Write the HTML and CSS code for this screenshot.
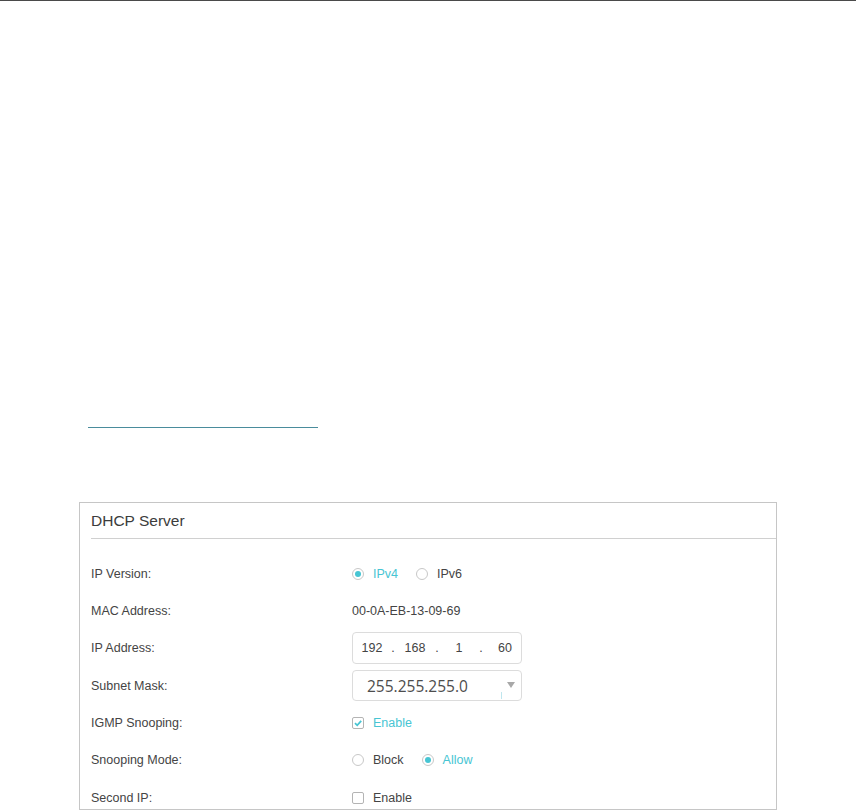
FILE: index.html
```html
<!DOCTYPE html>
<html>
<head>
<meta charset="utf-8">
<link rel="stylesheet" href="styles.css">
</head>
<body>
<div class="topbar"></div>
<div class="page">
  <div class="tabline"></div>
  <div class="panel">
    <div class="panel-head">DHCP Server</div>
    <div class="rows">
      <div class="row">
        <div class="label">IP Version:</div>
        <div class="value">
          <span class="opt on first"><span class="radio on"></span>IPv4</span>
          <span class="opt"><span class="radio"></span>IPv6</span>
        </div>
      </div>
      <div class="row">
        <div class="label">MAC Address:</div>
        <div class="value">00-0A-EB-13-09-69</div>
      </div>
      <div class="row">
        <div class="label">IP Address:</div>
        <div class="value">
          <div class="ipbox">
            <span class="oct o1">192</span><span class="dot">.</span><span class="oct o2">168</span><span class="dot">.</span><span class="oct o3">1</span><span class="dot">.</span><span class="oct o4">60</span>
          </div>
        </div>
      </div>
      <div class="row">
        <div class="label">Subnet Mask:</div>
        <div class="value">
          <div class="select">
            <span class="sel-text">255.255.255.0</span>
            <span class="caret-mark"></span>
            <span class="arrow"></span>
          </div>
        </div>
      </div>
      <div class="row">
        <div class="label">IGMP Snooping:</div>
        <div class="value">
          <span class="opt on"><span class="check on"><svg viewBox="0 0 12 12" width="12" height="12"><path d="M3 6.2 L5.2 8.3 L9.2 3.8" fill="none" stroke="#47c5d3" stroke-width="1.8"/></svg></span>Enable</span>
        </div>
      </div>
      <div class="row">
        <div class="label">Snooping Mode:</div>
        <div class="value">
          <span class="opt first"><span class="radio"></span>Block</span>
          <span class="opt on"><span class="radio on"></span>Allow</span>
        </div>
      </div>
      <div class="row">
        <div class="label">Second IP:</div>
        <div class="value">
          <span class="opt"><span class="check"></span>Enable</span>
        </div>
      </div>
    </div>
  </div>
</div>
</body>
</html>
```

FILE: styles.css
```css
html, body {
  margin: 0;
  padding: 0;
  background: #ffffff;
}
body {
  font-family: "Liberation Sans", Arial, sans-serif;
  color: #444444;
}
.topbar {
  height: 1px;
  background: #4a4a4a;
}
.page {
  padding-top: 426px;
}
.tabline {
  margin-left: 88px;
  width: 230px;
  height: 1px;
  background: #4a8c9c;
}
.panel {
  margin-top: 74px;
  margin-left: 79px;
  width: 698px;
  height: 308px;
  box-sizing: border-box;
  border: 1px solid #c6c6c6;
  overflow: hidden;
}
.panel-head {
  margin-left: 11px;
  height: 35px;
  line-height: 35px;
  font-size: 15.5px;
  color: #3c3c3c;
  border-bottom: 1px solid #d0d0d0;
}
.rows {
  padding-top: 16px;
  padding-left: 11px;
}
.row {
  display: flex;
  align-items: center;
  height: 37.33px;
  font-size: 12.5px;
}
.label {
  width: 261px;
  flex: none;
  color: #444;
}
.value {
  display: flex;
  align-items: center;
  color: #444;
}
.opt {
  display: inline-flex;
  align-items: center;
  color: #444;
}
.opt.on {
  color: #47c5d3;
}
.opt.first {
  margin-right: 18px;
}
.radio {
  width: 12px;
  height: 12px;
  box-sizing: border-box;
  border: 1px solid #c8c8c8;
  border-radius: 50%;
  margin-right: 9px;
  position: relative;
  background: #fff;
}
.radio.on::after {
  content: "";
  position: absolute;
  left: 2px;
  top: 2px;
  width: 6px;
  height: 6px;
  border-radius: 50%;
  background: #47c5d3;
}
.check {
  width: 12px;
  height: 12px;
  box-sizing: border-box;
  border: 1px solid #b4b4b4;
  border-radius: 2px;
  margin-right: 9px;
  position: relative;
  background: #fff;
}
.check svg {
  position: absolute;
  left: -1px;
  top: -1px;
}
.ipbox {
  display: flex;
  align-items: center;
  width: 170px;
  height: 32px;
  box-sizing: border-box;
  border: 1px solid #dcdcdc;
  border-radius: 4px;
  color: #444;
}
.oct {
  text-align: center;
}
.o1 { width: 38px; }
.o2 { width: 40px; }
.o3 { width: 40px; }
.o4 { width: 37px; text-align: right; box-sizing: border-box; padding-right: 8px; }
.dot {
  width: 4px;
  text-align: center;
}
.select {
  position: relative;
  display: flex;
  align-items: center;
  width: 170px;
  height: 31px;
  box-sizing: border-box;
  border: 1px solid #dcdcdc;
  border-radius: 4px;
  padding-left: 14px;
}
.sel-text {
  font-family: "Open Sans", "DejaVu Sans", sans-serif;
  font-size: 15.5px;
  color: #4d4d4d;
}
.arrow {
  position: absolute;
  right: 6px;
  top: 11px;
  width: 0;
  height: 0;
  border-left: 4.5px solid transparent;
  border-right: 4.5px solid transparent;
  border-top: 6px solid #a8a8a8;
}
.caret-mark {
  position: absolute;
  left: 148px;
  top: 21px;
  width: 1px;
  height: 7px;
  background: #bfe6ee;
}
```
